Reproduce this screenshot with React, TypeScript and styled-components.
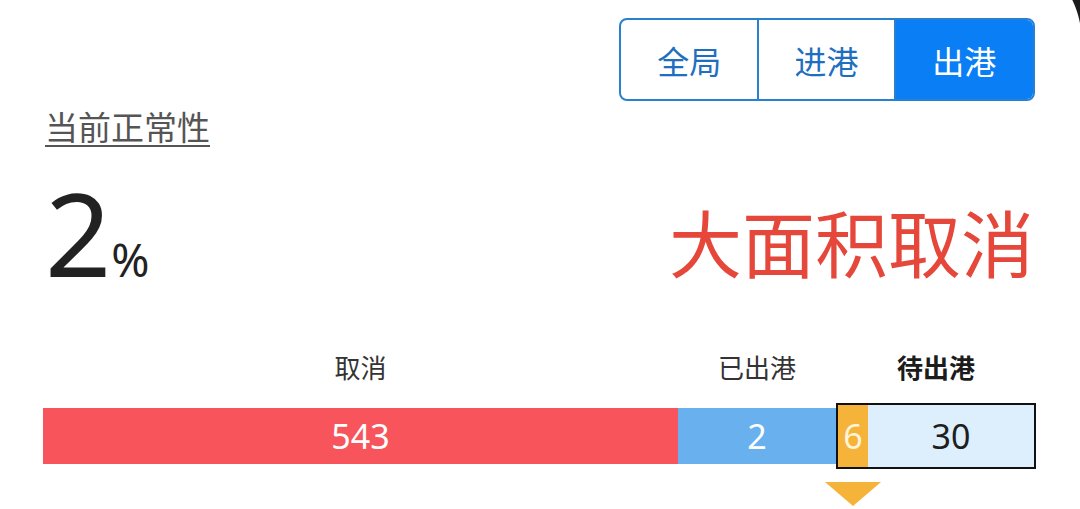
import { useState } from "react";
import styled, { createGlobalStyle } from "styled-components";

const GlobalStyle = createGlobalStyle`
  body {
    margin: 0;
    background-color: #ffffff;
    font-family: "Noto Sans", "Noto Sans CJK SC", sans-serif;
  }
`;

const Page = styled.div`
  position: relative;
  width: 1080px;
  height: 509px;
  padding: 18px 44px 0 43px;
  box-sizing: border-box;
  overflow: hidden;
`;

const ScreenCorner = styled.div`
  position: absolute;
  top: 0;
  right: 0;
  width: 8px;
  height: 30px;
  background: radial-gradient(
    circle at -82px 40px,
    transparent 91px,
    #1c1c1c 92px
  );
`;

const TopRow = styled.div`
  display: flex;
  justify-content: flex-end;
  padding-right: 1px;
`;

const Segmented = styled.div`
  display: flex;
  width: 416px;
  height: 83px;
  border: 2px solid #2a80d0;
  border-radius: 8px;
  box-sizing: border-box;
  overflow: hidden;
`;

const SegmentItem = styled.div<{ $active: boolean; $width: number }>`
  width: ${(p) => p.$width}px;
  display: flex;
  align-items: center;
  justify-content: center;
  font-family: "Noto Sans CJK SC", sans-serif;
  font-size: 32px;
  color: #1f6fc0;
  cursor: pointer;

  & + & {
    border-left: 2px solid #2a80d0;
  }

  ${(p) =>
    p.$active &&
    `
    background-color: #0a7ef5;
    color: #ffffff;
  `}
`;

const Title = styled.div`
  margin-top: 5px;
  padding-left: 2px;
  font-family: "Noto Sans CJK SC", sans-serif;
  font-size: 33px;
  line-height: 41px;
  color: #555555;
  text-decoration: underline;
  text-underline-offset: 5px;
  text-decoration-thickness: 2px;
`;

const ValueRow = styled.div`
  display: flex;
  justify-content: space-between;
  align-items: flex-end;
  margin-top: 27px;
`;

const Percent = styled.div`
  display: flex;
  align-items: baseline;
  font-family: "Noto Sans", sans-serif;
  line-height: 1;
  color: #222222;
  padding-left: 2px;
`;

const Digit = styled.span`
  font-size: 116px;
`;

const PercentSign = styled.span`
  font-size: 46px;
`;

const Status = styled.div`
  font-family: "Noto Sans CJK SC", sans-serif;
  font-size: 73px;
  line-height: 1;
  color: #e5473b;
  margin-bottom: 13px;
  margin-right: 2px;
`;

const LabelRow = styled.div`
  display: flex;
  margin-top: 59px;
`;

const Label = styled.div<{ $width: number; $bold?: boolean }>`
  width: ${(p) => p.$width}px;
  text-align: center;
  font-family: "Noto Sans CJK SC", sans-serif;
  font-size: 26px;
  line-height: 36px;
  color: ${(p) => (p.$bold ? "#1c1c1c" : "#333333")};
  font-weight: ${(p) => (p.$bold ? 700 : 400)};
`;

const BarRow = styled.div`
  display: flex;
  align-items: center;
  height: 66px;
  margin-top: 18px;
`;

const Cell = styled.div<{ $color: string; $text: string }>`
  height: 56px;
  display: flex;
  align-items: center;
  justify-content: center;
  background-color: ${(p) => p.$color};
  color: ${(p) => p.$text};
  font-family: "Noto Sans", sans-serif;
  font-size: 34px;
`;

const Pending = styled.div<{ $width: number }>`
  width: ${(p) => p.$width}px;
  height: 66px;
  display: flex;
  border: 2px solid #111111;
  box-sizing: border-box;
`;

const PendingCell = styled(Cell)`
  position: relative;
  height: auto;
  align-self: stretch;
`;

const Pointer = styled.div`
  position: absolute;
  top: calc(100% + 15px);
  left: 50%;
  transform: translateX(-50%);
  width: 0;
  height: 0;
  border-left: 28px solid transparent;
  border-right: 28px solid transparent;
  border-top: 24px solid #f6b33a;
`;

const tabs = ["全局", "进港", "出港"];
const tabWidths = [139, 137, 140];

export default function App() {
  const [active, setActive] = useState(2);

  return (
    <Page>
      <GlobalStyle />
      <ScreenCorner />
      <TopRow>
        <Segmented>
          {tabs.map((tab, i) => (
            <SegmentItem
              key={tab}
              $width={tabWidths[i]}
              $active={active === i}
              onClick={() => setActive(i)}
            >
              {tab}
            </SegmentItem>
          ))}
        </Segmented>
      </TopRow>
      <Title>当前正常性</Title>
      <ValueRow>
        <Percent>
          <Digit>2</Digit>
          <PercentSign>%</PercentSign>
        </Percent>
        <Status>大面积取消</Status>
      </ValueRow>
      <LabelRow>
        <Label $width={635}>取消</Label>
        <Label $width={158}>已出港</Label>
        <Label $width={200} $bold>
          待出港
        </Label>
      </LabelRow>
      <BarRow>
        <Cell $color="#f8545b" $text="#ffffff" style={{ width: 635 }}>
          543
        </Cell>
        <Cell $color="#68b1ee" $text="#ffffff" style={{ width: 158 }}>
          2
        </Cell>
        <Pending $width={200}>
          <PendingCell $color="#f6b33a" $text="#fff4d6" style={{ width: 30 }}>
            6
            <Pointer />
          </PendingCell>
          <PendingCell $color="#ddeefd" $text="#1e1e1e" style={{ flex: 1 }}>
            30
          </PendingCell>
        </Pending>
      </BarRow>
    </Page>
  );
}
